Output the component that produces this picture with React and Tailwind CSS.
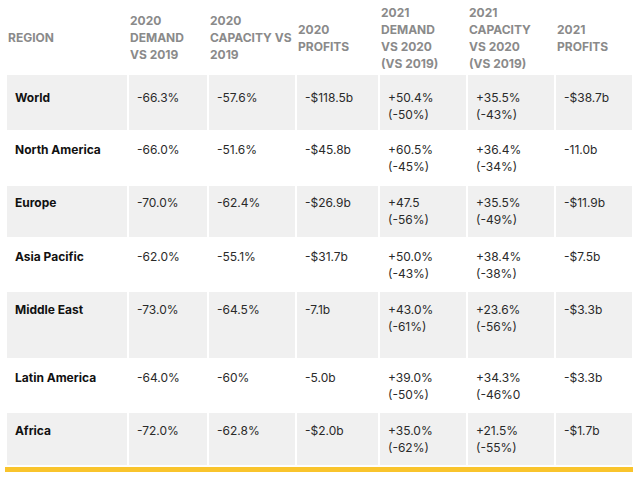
const columns = [
  { label: ["REGION"], width: "w-[120px]" },
  { label: ["2020", "DEMAND", "VS 2019"], width: "w-[78px]" },
  { label: ["2020", "CAPACITY VS", "2019"], width: "w-[86px]" },
  { label: ["2020", "PROFITS"], width: "w-[81px]" },
  { label: ["2021", "DEMAND", "VS 2020", "(VS 2019)"], width: "w-[86px]" },
  { label: ["2021", "CAPACITY", "VS 2020", "(VS 2019)"], width: "w-[86px]" },
  { label: ["2021", "PROFITS"], width: "w-[76px]" },
];

const rows = [
  {
    region: "World",
    h: "h-[55px]",
    pt: "pt-[14px]",
    gray: true,
    cells: ["-66.3%", "-57.6%", "-$118.5b", ["+50.4%", "(-50%)"], ["+35.5%", "(-43%)"], "-$38.7b"],
  },
  {
    region: "North America",
    h: "h-[52px]",
    pt: "pt-[9px]",
    gray: false,
    cells: ["-66.0%", "-51.6%", "-$45.8b", ["+60.5%", "(-45%)"], ["+36.4%", "(-34%)"], "-11.0b"],
  },
  {
    region: "Europe",
    h: "h-[51px]",
    pt: "pt-[8px]",
    gray: true,
    cells: ["-70.0%", "-62.4%", "-$26.9b", ["+47.5", "(-56%)"], ["+35.5%", "(-49%)"], "-$11.9b"],
  },
  {
    region: "Asia Pacific",
    h: "h-[51px]",
    pt: "pt-[9px]",
    gray: false,
    cells: ["-62.0%", "-55.1%", "-$31.7b", ["+50.0%", "(-43%)"], ["+38.4%", "(-38%)"], "-$7.5b"],
  },
  {
    region: "Middle East",
    h: "h-[66px]",
    pt: "pt-[9px]",
    gray: true,
    cells: ["-73.0%", "-64.5%", "-7.1b", ["+43.0%", "(-61%)"], ["+23.6%", "(-56%)"], "-$3.3b"],
  },
  {
    region: "Latin America",
    h: "h-[51px]",
    pt: "pt-[9px]",
    gray: false,
    cells: ["-64.0%", "-60%", "-5.0b", ["+39.0%", "(-50%)"], ["+34.3%", "(-46%0"], "-$3.3b"],
  },
  {
    region: "Africa",
    h: "h-[52px]",
    pt: "pt-[9px]",
    gray: true,
    cells: ["-72.0%", "-62.8%", "-$2.0b", ["+35.0%", "(-62%)"], ["+21.5%", "(-55%)"], "-$1.7b"],
  },
];

const App = () => {
  return (
    <div className="w-[640px] h-[480px] bg-white pl-[5px] font-['Inter','Liberation_Sans',sans-serif] text-[12px] leading-[17px]">
      <table className="w-[629px] table-fixed border-separate border-spacing-[2px]">
        <thead>
          <tr className="h-[71px]">
            {columns.map((col) => (
              <th
                key={col.label.join(" ")}
                className={`${col.width} px-[1px] text-left align-middle font-bold text-[#8a8a8a]`}
              >
                {col.label.map((line) => (
                  <div key={line}>{line}</div>
                ))}
              </th>
            ))}
          </tr>
        </thead>
        <tbody>
          {rows.map((row) => (
            <tr key={row.region} className={row.h}>
              <td
                className={`${row.pt} px-2 align-top font-bold text-[#111] ${
                  row.gray ? "bg-[#f0f0f0]" : "bg-white"
                }`}
              >
                {row.region}
              </td>
              {row.cells.map((cell, i) => (
                <td
                  key={i}
                  className={`${row.pt} px-2 align-top text-[#2a2a2a] ${
                    row.gray ? "bg-[#f0f0f0]" : "bg-white"
                  }`}
                >
                  {Array.isArray(cell)
                    ? cell.map((line) => <div key={line}>{line}</div>)
                    : cell}
                </td>
              ))}
            </tr>
          ))}
        </tbody>
      </table>
      {/* yellow rule under the table */}
      <div className="h-[5px] w-[628px] bg-[#f9c42c]" />
    </div>
  );
};

export default App;
